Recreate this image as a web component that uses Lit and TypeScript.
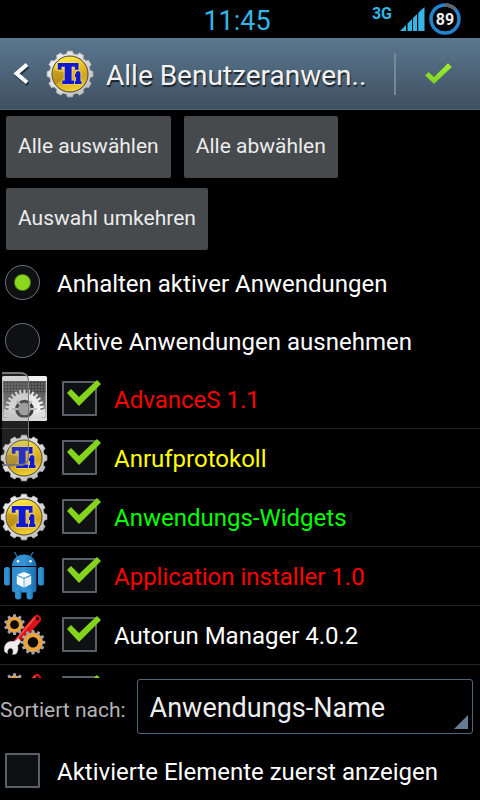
import { LitElement, html, svg, css } from "lit";
import { customElement, property } from "lit/decorators.js";

function gear(cx: number, cy: number, outer: number, inner: number, teeth: number, turn = 0): string {
  const points: string[] = [];
  const step = (Math.PI * 2) / teeth;
  for (let i = 0; i < teeth; i++) {
    const a = i * step + turn;
    const stops: [number, number][] = [
      [-0.32, inner],
      [-0.2, outer],
      [0.2, outer],
      [0.32, inner],
    ];
    for (const [f, r] of stops) {
      const t = a + f * step;
      points.push(`${(cx + r * Math.sin(t)).toFixed(2)} ${(cy - r * Math.cos(t)).toFixed(2)}`);
    }
  }
  return `M${points.join("L")}Z`;
}

const titanium = svg`
  <defs>
    <linearGradient id="silver" x1="0" y1="0" x2="1" y2="1">
      <stop offset="0" stop-color="#f4f4f4"/><stop offset=".5" stop-color="#dcdcdc"/><stop offset="1" stop-color="#b4b4b4"/>
    </linearGradient>
    <linearGradient id="gold" x1=".35" y1="0" x2=".6" y2="1">
      <stop offset="0" stop-color="#fff04a"/><stop offset=".3" stop-color="#ecc52a"/><stop offset=".65" stop-color="#d2a41c"/><stop offset="1" stop-color="#f4d632"/>
    </linearGradient>
  </defs>
  <path d=${gear(24, 24, 23, 20.4, 12)} fill="url(#silver)" stroke="#bdbdbd" stroke-width=".8" stroke-linejoin="round"/>
  <circle cx="24" cy="24" r="18" fill="url(#gold)" stroke="#4a4436" stroke-width="1"/>
  <path d="M24 24L10 34A17 17 0 0 1 7.500 20z" fill="#8a6508" opacity=".35"/>
  <text class="mark" y="33"><tspan x="12.500" font-size="26">T</tspan><tspan x="29.500" font-size="14">i</tspan></text>`;

const settings = svg`
  <defs>
    <linearGradient id="plate" x1="0" y1="0" x2="0" y2="1">
      <stop offset="0" stop-color="#444"/><stop offset=".5" stop-color="#6d6d6d"/><stop offset="1" stop-color="#a0a0a0"/>
    </linearGradient>
    <linearGradient id="steel" x1="0" y1="0" x2="0" y2="1">
      <stop offset="0" stop-color="#e2e2e2"/><stop offset=".5" stop-color="#f2f2f2"/><stop offset="1" stop-color="#b5b5b5"/>
    </linearGradient>
    <pattern id="holes" width="3" height="3" patternUnits="userSpaceOnUse">
      <rect width="3" height="3" fill="#6c6c6c"/><circle cx="1.500" cy="1.500" r="1.200" fill="#3a3a3a"/>
    </pattern>
    <clipPath id="frame"><rect x="3.500" y="6" width="42" height="37"/></clipPath>
  </defs>
  <rect x="2" y="1" width="45" height="45" rx="3" fill="#c4c4c4"/>
  <rect x="2" y="1" width="45" height="5" rx="2" fill="#f0f0f0"/>
  <g clip-path="url(#frame)">
    <rect x="3" y="6" width="43" height="40" fill="url(#plate)"/>
    <rect x="3" y="6" width="43" height="12" fill="url(#holes)"/>
    <path d=${gear(5, 46, 12, 9, 16)} fill="#ddd"/><circle cx="5" cy="46" r="4" fill="#777"/>
    <path d=${gear(44, 46, 12, 9, 16)} fill="#ddd"/><circle cx="44" cy="46" r="4" fill="#777"/>
    <path d=${gear(24.5, 34, 19.5, 15.8, 26)} fill="url(#steel)"/>
    <circle cx="24.500" cy="34" r="9.300" fill="#3c3c3c"/>
    <path d="M24.500 34L17 26M24.500 34L32 26M24.500 34H12M24.500 34H37" stroke="#c4c4c4" stroke-width="2"/>
    <circle cx="24.500" cy="34" r="6.300" fill="#a8a8a8"/>
  </g>
  <rect x="2" y="42.500" width="45" height="3.500" rx="1.500" fill="#dcdcdc"/>`;

const robot = svg`
  <defs>
    <linearGradient id="blue" x1="0" y1="0" x2="1" y2="0">
      <stop offset="0" stop-color="#2f8bca"/><stop offset=".5" stop-color="#3594d6"/><stop offset="1" stop-color="#1c6dab"/>
    </linearGradient>
  </defs>
  <path d="M14.500 0l2.800 5M33 0l-2.800 5" stroke="#2a7fba" stroke-width="1.200" stroke-linecap="round"/>
  <g fill="url(#blue)">
    <path d="M12 14a12.200 11.500 0 0 1 24.400 0z"/>
    <path d="M12 15h24.400v22.500a3 3 0 0 1-3 3H15a3 3 0 0 1-3-3z"/>
    <rect x="4" y="15" width="6.200" height="18.500" rx="2.500"/>
    <rect x="38" y="15" width="6.200" height="18.500" rx="2.500"/>
    <rect x="15" y="37" width="6.500" height="10.500" rx="3"/>
    <rect x="26.500" y="37" width="6.500" height="10.500" rx="3"/>
  </g>
  <circle cx="18" cy="9.300" r="1.300" fill="#fff"/><circle cx="30.500" cy="9.300" r="1.300" fill="#fff"/>
  <g fill="#fff">
    <path d="M24 20l7 2.800-7 3-7-3z"/>
    <path d="M16.800 23.800l6.800 2.900v8.800l-6.800-3.600z"/>
    <path d="M31.200 23.800l-6.800 2.900v8.800l6.800-3.600z" fill="#eaf1f7"/>
  </g>`;

const tools = svg`
  <path d=${gear(14.5, 13.7, 10.5, 8.3, 10)} fill="#a3a3ac"/>
  <circle cx="14.500" cy="13.700" r="6" fill="none" stroke="#f0a232" stroke-width="3.200"/>
  <circle cx="14.500" cy="13.700" r="4.400" fill="#0a0a0a"/>
  <path d="M16.500 30.500L28 18.500" stroke="#c90d10" stroke-width="5.500" stroke-linecap="round"/>
  <path d="M26 20.500L37 8" stroke="#d81418" stroke-width="8" stroke-linecap="round"/>
  <path d="M17 28L34.500 7" stroke="#ff5548" stroke-width="1.500" stroke-linecap="round"/>
  <circle cx="37.500" cy="7.700" r="1.800" fill="#250000"/>
  <path d="M18.500 27.500l2.500 3-3.300 4.200c.8 3.300.2 6-1.700 8.300l-3.500.5c1.300-3.800.3-6.300-2-6.300-2 0-3.400 2-2.900 5.300l-2.800-1.500C2.800 34.500 7 29.300 14 30.500z" fill="#ededed" stroke="#bbb" stroke-width=".5"/>
  <path d=${gear(33, 31.3, 12.3, 10, 12)} fill="#a3a3ac"/>
  <circle cx="33" cy="31.300" r="7.300" fill="none" stroke="#f0a232" stroke-width="4"/>
  <circle cx="33" cy="31.300" r="5.200" fill="#0a0a0a"/>`;

const icons = { titanium, settings, robot, tools };
type IconName = keyof typeof icons;

@customElement("app-icon")
export class AppIcon extends LitElement {
  @property() name: IconName = "titanium";

  static styles = css`
    :host { display: block; width: 48px; height: 48px; flex: none; }
    .icon { display: block; }
    .mark {
      font-family: "DejaVu Serif", serif;
      font-weight: 700;
      fill: #1018d0;
      stroke: #1018d0;
      stroke-width: 2px;
      filter: drop-shadow(0 0 1px #fff6d0);
    }
  `;

  render() {
    return html`<svg class="icon" width="48" height="48" viewBox="0 0 48 48" fill="none" aria-hidden="true">${icons[this.name]}</svg>`;
  }
}

interface Entry {
  icon: IconName;
  label: string;
  tone: string;
}

const entries: Entry[] = [
  { icon: "settings", label: "AdvanceS 1.1", tone: "red" },
  { icon: "titanium", label: "Anrufprotokoll", tone: "yellow" },
  { icon: "titanium", label: "Anwendungs-Widgets", tone: "green" },
  { icon: "robot", label: "Application installer 1.0", tone: "red" },
  { icon: "tools", label: "Autorun Manager 4.0.2", tone: "white" },
  { icon: "tools", label: "", tone: "white" },
];

@customElement("app-root")
export class AppRoot extends LitElement {
  static styles = css`
    :host {
      display: flex;
      flex-direction: column;
      height: 100vh;
      background: #000;
      color: #fff;
      font-family: Roboto, "Liberation Sans", sans-serif;
      font-size: 24px;
      line-height: 32px;
      overflow: hidden;
    }
    * { box-sizing: border-box; }
    button, select, input { font: inherit; color: inherit; margin: 0; padding: 0; border: 0; }
    .status {
      display: grid;
      grid-template-columns: 1fr auto 1fr;
      align-items: center;
      height: 38px;
      flex: none;
      color: #33b5e5;
    }
    .clock { grid-column: 2; font-size: 27px; padding: 4px 6px 0 0; }
    .indicators { display: flex; justify-content: flex-end; gap: 4px; padding-right: 19px; }
    .net { font-size: 16px; font-weight: 700; line-height: 26px; padding-right: 4px; }
    .header {
      display: flex;
      align-items: center;
      height: 72px;
      flex: none;
      padding-left: 12px;
      background: linear-gradient(#5b788f, #3e4f60);
      border-bottom: 1px solid #4d6478;
    }
    .back, .done { display: flex; align-items: center; justify-content: center; background: none; height: 100%; }
    .back { width: 18px; }
    .header app-icon { margin-left: 16px; }
    .title {
      flex: 1;
      min-width: 0;
      margin: 0 0 0 12px;
      padding-top: 4px;
      font-size: 28px;
      font-weight: 400;
      line-height: 40px;
      white-space: nowrap;
      overflow: hidden;
      color: #f2f2f2;
      text-shadow: 1px 2px 1px #1c242c;
    }
    .rule { width: 2px; height: 42px; background: #74889a; }
    .done { width: 84px; }
    .actions { display: flex; flex-wrap: wrap; gap: 10px 13px; padding: 6px 6px 4px; flex: none; }
    .action {
      height: 62px;
      padding: 0 12px 2px;
      border-radius: 2px;
      background: #464a4d;
      color: #ececec;
      font-size: 21px;
    }
    .modes { border: 0; margin: 0; padding: 0; min-width: 0; flex: none; }
    .option { display: flex; align-items: center; gap: 17px; height: 58px; padding: 0 0 1px 5px; }
    .text { padding-top: 2px; }
    .radio {
      appearance: none;
      width: 35px;
      height: 35px;
      flex: none;
      border: 1px solid #6c7380;
      border-radius: 50%;
      background: #0e1012;
    }
    .radio:checked { background: radial-gradient(circle, #8ad81c 7px, #0e1012 9px); }
    .list { position: relative; flex: 1 1 0; min-height: 0; overflow: hidden; margin: 0; padding: 0; list-style: none; }
    .row { border-bottom: 1px solid #262626; }
    .pick { display: flex; align-items: center; height: 58px; padding-bottom: 1px; }
    .pick .check { margin: 0 17px 0 14px; }
    .check {
      appearance: none;
      position: relative;
      width: 35px;
      height: 35px;
      flex: none;
      border: 2px solid #596069;
      border-radius: 1px;
      background: #0e1012;
    }
    .check:checked::after {
      content: "";
      position: absolute;
      left: 3px;
      top: -3px;
      width: 34px;
      height: 26px;
      background: #84d41c;
      clip-path: polygon(30px 0, 34px 4px, 12px 26px, 0 13px, 4px 9px, 12px 17px);
    }
    .red { color: #f00; }
    .yellow { color: #ff0; }
    .green { color: #0f0; }
    .thumb {
      position: absolute;
      left: 2px;
      top: 2px;
      width: 27px;
      height: 94px;
      border: solid #777;
      border-width: 2px 1px 2px 0;
      border-radius: 0 8px 8px 0;
      background: #80808040;
    }
    .sort { display: flex; align-items: center; gap: 11px; padding: 1px 7px 0 0; flex: none; }
    .caption { font-size: 21px; color: #b4b4b4; padding-top: 6px; }
    .chooser { position: relative; flex: 1; min-width: 0; }
    .select {
      appearance: none;
      display: block;
      width: 100%;
      height: 55px;
      padding: 2px 12px 0;
      border: 1px solid #50687b;
      border-radius: 3px;
      background: #000;
      color: #ededed;
      font-size: 27px;
    }
    .corner {
      position: absolute;
      right: 5px;
      bottom: 5px;
      width: 14px;
      height: 14px;
      background: #667a90;
      clip-path: polygon(100% 0, 100% 100%, 0 100%);
      pointer-events: none;
    }
    .active { margin: 8px 0 0; flex: none; }
  `;

  render() {
    return html`
      <div class="status">
        <span class="clock">11:45</span>
        <div class="indicators">
          <span class="net">3G</span>
          <svg width="25" height="34" viewBox="0 0 25 34" fill="#33b5e5" aria-hidden="true">
            <path d="M0 30l6-6v6zM7.500 22.500l4.500-4.500v12H7.500zM13 17l4-4v17h-4zM18 12l.8-.8V30H18zM19 11l5.500-5v24H19z"/>
          </svg>
          <svg width="32" height="36" viewBox="0 0 32 36" fill="none" aria-hidden="true">
            <circle cx="16" cy="18" r="14" stroke="#2384cf" stroke-width="3.500"/>
            <path d="M16 4a14 14 0 0 1 10 4" stroke="#666" stroke-width="3.500"/>
            <text x="16" y="24" text-anchor="middle" font-size="16" font-weight="700" fill="#eee">89</text>
          </svg>
        </div>
      </div>
      <header class="header">
        <button class="back" aria-label="Zurück">
          <svg width="18" height="28" viewBox="0 0 18 28" fill="none" aria-hidden="true">
            <path d="M15 4.500L4.500 13.500 15 22.500" transform="translate(1 2)" stroke="#26323d" stroke-width="4"/>
            <path d="M15 4.500L4.500 13.500 15 22.500" stroke="#fff" stroke-width="4"/>
          </svg>
        </button>
        <app-icon name="titanium"></app-icon>
        <h1 class="title">Alle Benutzeranwen..</h1>
        <span class="rule"></span>
        <button class="done" aria-label="Fertig">
          <svg width="30" height="24" viewBox="0 0 30 24" aria-hidden="true">
            <defs><linearGradient id="lime" x1="0" y1="0" x2="0" y2="1"><stop offset="0" stop-color="#a6ec3c"/><stop offset="1" stop-color="#7ed321"/></linearGradient></defs>
            <path d="M25 1l4 4L11 22 2 13.500 5.500 10 11 15z" fill="url(#lime)" stroke="#5a8a3a" stroke-width=".6"/>
          </svg>
        </button>
      </header>
      <div class="actions">
        <button class="action">Alle auswählen</button>
        <button class="action">Alle abwählen</button>
        <button class="action">Auswahl umkehren</button>
      </div>
      <fieldset class="modes" aria-label="Aktive Anwendungen">
        <label class="option"><input class="radio" type="radio" name="mode" checked /><span class="text">Anhalten aktiver Anwendungen</span></label>
        <label class="option"><input class="radio" type="radio" name="mode" /><span class="text">Aktive Anwendungen ausnehmen</span></label>
      </fieldset>
      <ul class="list">
        ${entries.map(
          (e) => html`<li class="row">
            <label class="pick">
              <app-icon name=${e.icon}></app-icon>
              <input class="check" type="checkbox" checked />
              <span class="text ${e.tone}">${e.label}</span>
            </label>
          </li>`
        )}
        <li class="thumb" aria-hidden="true"></li>
      </ul>
      <div class="sort">
        <label class="caption" for="sort">Sortiert nach:</label>
        <div class="chooser">
          <select class="select" id="sort">
            <option>Anwendungs-Name</option>
          </select>
          <span class="corner"></span>
        </div>
      </div>
      <label class="option active"><input class="check" type="checkbox" /><span class="text">Aktivierte Elemente zuerst anzeigen</span></label>
    `;
  }
}
